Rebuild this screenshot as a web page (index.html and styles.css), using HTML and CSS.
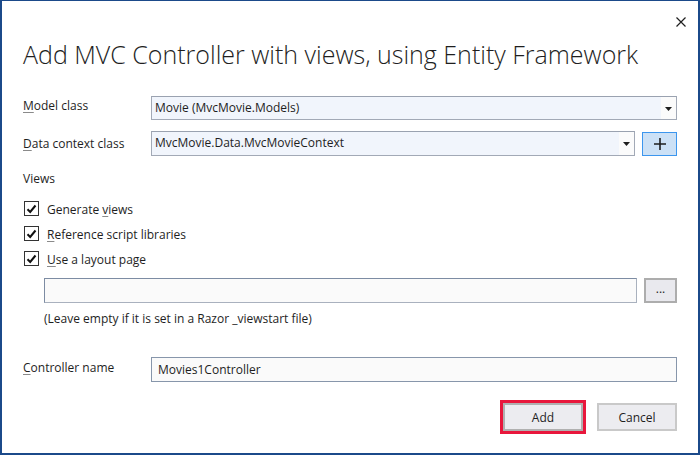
FILE: index.html
```html
<!DOCTYPE html>
<html>
<head>
<meta charset="utf-8">
<link rel="stylesheet" href="styles.css">
</head>
<body>
<div class="dialog">
  <div class="titlebar">
    <svg class="close" width="10" height="10" viewBox="0 0 10 10"><path d="M0.5 0.5L9.5 9.5M9.5 0.5L0.5 9.5" stroke="#1e1e1e" stroke-width="1.2" fill="none"/></svg>
  </div>
  <h1 class="title">Add MVC Controller with views, using Entity Framework</h1>

  <div class="form">
    <div class="row row-model">
      <label class="label"><u>M</u>odel class</label>
      <div class="combo">
        <span class="combo-text">Movie (MvcMovie.Models)</span>
        <span class="combo-arrow"><svg width="7" height="4" viewBox="0 0 7 4"><path d="M0 0H7L3.5 4Z" fill="#1e1e1e"/></svg></span>
      </div>
    </div>
    <div class="row row-context">
      <label class="label"><u>D</u>ata context class</label>
      <div class="combo">
        <span class="combo-text">MvcMovie.Data.MvcMovieContext</span>
        <span class="combo-arrow"><svg width="7" height="4" viewBox="0 0 7 4"><path d="M0 0H7L3.5 4Z" fill="#1e1e1e"/></svg></span>
      </div>
      <button class="plus"><svg width="12" height="12" viewBox="0 0 12 12"><path d="M6 0V12M0 6H12" stroke="#1e1e1e" stroke-width="1.6"/></svg></button>
    </div>
  </div>

  <div class="views-label">Views</div>
  <div class="checks">
    <div class="check"><span class="box"><svg width="11" height="10" viewBox="0 0 11 10"><path d="M1.5 5.2L4.2 8L9.5 1.5" stroke="#111" stroke-width="2" fill="none"/></svg></span><span>Generate <u>v</u>iews</span></div>
    <div class="check"><span class="box"><svg width="11" height="10" viewBox="0 0 11 10"><path d="M1.5 5.2L4.2 8L9.5 1.5" stroke="#111" stroke-width="2" fill="none"/></svg></span><span><u>R</u>eference script libraries</span></div>
    <div class="check"><span class="box"><svg width="11" height="10" viewBox="0 0 11 10"><path d="M1.5 5.2L4.2 8L9.5 1.5" stroke="#111" stroke-width="2" fill="none"/></svg></span><span><u>U</u>se a layout page</span></div>
  </div>
  <div class="layout-row">
    <div class="textbox layout-box"></div>
    <button class="browse">...</button>
  </div>
  <div class="hint">(Leave empty if it is set in a Razor _viewstart file)</div>

  <div class="row row-controller">
    <label class="label"><u>C</u>ontroller name</label>
    <div class="textbox name-box">Movies1Controller</div>
  </div>

  <div class="actions">
    <button class="btn btn-add">Add</button>
    <button class="btn">Cancel</button>
  </div>
</div>
</body>
</html>
```

FILE: styles.css
```css
html, body {
  margin: 0;
  padding: 0;
  background: #ffffff;
}

.dialog {
  width: 700px;
  height: 455px;
  box-sizing: border-box;
  border: 2px solid #1b4a8a;
  border-top-width: 1px;
  background: #ffffff;
  padding: 0 21px 0 21px;
  display: flex;
  flex-direction: column;
  font-family: "Open Sans", "Noto Sans", sans-serif;
  font-size: 12px;
  color: #1e1e1e;
}

.titlebar {
  height: 38px;
  display: flex;
  justify-content: flex-end;
  align-items: flex-start;
  margin-right: -9px;
}

.close {
  margin-top: 16px;
}

.title {
  margin: 0;
  font-family: "Open Sans", sans-serif;
  font-weight: 300;
  font-size: 25px;
  line-height: 30px;
  color: #1e1e1e;
  letter-spacing: 0;
  white-space: nowrap;
}

.form {
  margin-top: 27px;
  display: flex;
  flex-direction: column;
  gap: 11px;
}

.row {
  display: flex;
  align-items: center;
}

.label {
  width: 128px;
  flex: none;
  line-height: 16px;
}

.row-model .label {
  margin-top: -4px;
}

.row-controller .label {
  margin-top: -3px;
}

u {
  text-decoration: underline;
  text-underline-offset: 2px;
  text-decoration-color: #8a8a8a;
}

.combo {
  flex: 1;
  height: 24px;
  box-sizing: border-box;
  border: 1px solid #a2a9b6;
  border-top-color: #9aa2b0;
  background: #f1f5fc;
  display: flex;
  align-items: stretch;
}

.row-context .combo {
  height: 25px;
}

.combo-text {
  flex: 1;
  padding-left: 3px;
  line-height: 21px;
  white-space: nowrap;
}

.combo-arrow {
  width: 15px;
  background: #fbfbfb;
  display: flex;
  align-items: center;
  justify-content: center;
  padding-top: 1px;
}

.plus {
  width: 35px;
  height: 24px;
  margin: 0 0 0 7px;
  padding: 0;
  box-sizing: border-box;
  border: 1px solid #3c96ee;
  background: #cce1f6;
  display: flex;
  align-items: center;
  justify-content: center;
}

.views-label {
  margin-top: 15px;
  line-height: 16px;
}

.checks {
  margin-top: 9px;
  display: flex;
  flex-direction: column;
}

.check {
  height: 25px;
  display: flex;
  align-items: center;
  gap: 8px;
  padding-left: 1px;
}

.check span:last-child {
  margin-top: 2px;
}

.box {
  width: 15px;
  height: 15px;
  box-sizing: border-box;
  border: 1px solid #333333;
  background: #ffffff;
  display: flex;
  align-items: center;
  justify-content: center;
  flex: none;
}

.layout-row {
  margin-top: 7px;
  margin-left: 21px;
  display: flex;
  gap: 7px;
}

.textbox {
  height: 25px;
  box-sizing: border-box;
  border: 1px solid #8796ab;
  background: #fafafa;
}

.layout-box {
  flex: 1;
  border-color: #7d8ca3 #a9b1be #a9b1be #7d8ca3;
}

.browse {
  width: 33px;
  height: 25px;
  margin: 0;
  padding: 0 0 4px 0;
  box-sizing: border-box;
  border: 2px solid #adadad;
  background: #e9e9ee;
  font-family: "Open Sans", sans-serif;
  font-size: 12px;
  color: #1e1e1e;
}

.hint {
  margin-top: 8px;
  margin-left: 21px;
  line-height: 16px;
}

.row-controller {
  margin-top: 30px;
}

.name-box {
  flex: 1;
  padding-left: 6px;
  line-height: 23px;
}

.actions {
  margin-top: 21px;
  display: flex;
  justify-content: flex-end;
  gap: 14px;
}

.btn {
  width: 80px;
  height: 28px;
  margin: 0;
  padding: 0;
  box-sizing: border-box;
  border: 2px solid #c9c9c9;
  background: #ececf0;
  font-family: "Open Sans", sans-serif;
  font-size: 12px;
  color: #1e1e1e;
}

.btn-add {
  outline: 3px solid #e8173c;
  outline-offset: 0;
  border-color: #b0b0b0;
}
```
